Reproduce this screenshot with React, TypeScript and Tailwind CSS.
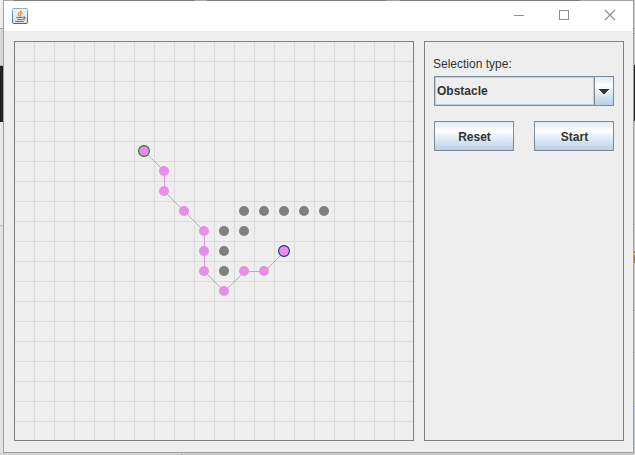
import React from 'react';

type Point = [number, number];

const CELL = 20;
const path: Point[] = [[6, 5], [7, 6], [7, 7], [8, 8], [9, 9], [9, 10], [9, 11], [10, 12], [11, 11], [12, 11], [13, 10]];
const obstacles: Point[] = [[11, 8], [12, 8], [13, 8], [14, 8], [15, 8], [10, 9], [11, 9], [10, 10], [10, 11]];
const lines = Array.from({ length: 19 }, (_, i) => (i + 1) * CELL);
const px = (n: number) => n * CELL + 10;

function JavaIcon() {
  return (
    <svg width="16" height="16" viewBox="0 0 16 16">
      <defs>
        <linearGradient id="tile" x1="0" y1="0" x2="0" y2="1">
          <stop offset="0" stopColor="#f4f6f8" />
          <stop offset="1" stopColor="#d5dfe7" />
        </linearGradient>
        <linearGradient id="edge" x1="0" y1="0" x2="0" y2="1">
          <stop offset="0" stopColor="#9aa9b5" />
          <stop offset="1" stopColor="#3f6e91" />
        </linearGradient>
      </defs>
      <rect x=".5" y=".5" width="15" height="15" rx="1" fill="url(#tile)" stroke="url(#edge)" />
      <path d="M9.3 2.2C9.3 4.2 6 4.5 6.3 6.4C6.4 7.3 7.2 7.7 7.5 8.5M10.7 4.6C8.5 5.2 7.9 6 8.7 6.9C9.1 7.5 8.8 8.1 8.3 8.5" fill="none" stroke="#ee8b2d" strokeWidth="1.2" />
      <path d="M4.3 9.5H11M5.2 11.5H10.5M3.3 13.5H11.8M11 9.3C13.8 8.2 14 11 11 11.4" fill="none" stroke="#4b7fa6" strokeWidth="1.1" />
    </svg>
  );
}

function Board() {
  return (
    <div className="size-[400px] shrink-0 border border-[#808080]">
      <svg className="block" width="398" height="398" viewBox="1 1 398 398">
        <g fill="#dbdbdb">
          {lines.map((v) => (
            <React.Fragment key={v}>
              <rect x={v} y="1" width="1" height="398" />
              <rect x="1" y={v} width="398" height="1" />
            </React.Fragment>
          ))}
        </g>
        <polyline
          points={path.map(([x, y]) => `${px(x) + 0.5},${px(y) + 0.5}`).join(' ')}
          fill="none"
          stroke="#e68fe6"
          shapeRendering="crispEdges"
        />
        {obstacles.map(([x, y]) => (
          <circle key={`${x}-${y}`} cx={px(x)} cy={px(y)} r="5" fill="#808080" />
        ))}
        {path.map(([x, y]) => (
          <circle key={`${x}-${y}`} cx={px(x)} cy={px(y)} r="5" fill="#e68fe6" />
        ))}
        <circle cx="130" cy="110" r="5.4" fill="#e68fe6" stroke="#267326" strokeWidth="1.1" />
        <circle cx="270" cy="210" r="5.4" fill="#e68fe6" stroke="#172f7c" strokeWidth="1.1" />
      </svg>
    </div>
  );
}

const metal = 'border border-[#7a8a99] bg-linear-to-b from-[#dfe9f2] via-white via-30% to-[#b8cfe5]';

function MetalButton({ label }: { label: string }) {
  return (
    <button className={`flex h-[30px] w-20 items-center justify-center pt-0.5 pl-px text-[12px] font-bold ${metal}`}>
      {label}
    </button>
  );
}

function Controls() {
  return (
    <div className="h-[400px] w-[200px] shrink-0 border border-[#808080] px-[9px] pt-[14px]">
      <div className="-ml-px h-5 text-[12px] leading-4">Selection type:</div>
      <div className="flex h-[30px] w-[180px] border border-[#7a8a99]">
        <div className="flex flex-1 items-center border border-[#b8cfe5] pl-px text-[12px] font-bold">Obstacle</div>
        <div className="flex w-[19px] items-center justify-center border-l border-[#7a8a99] bg-linear-to-b from-[#dfe9f2] via-white via-30% to-[#b8cfe5]">
          <svg width="10" height="5" viewBox="0 0 10 5" shapeRendering="crispEdges">
            <path d="M0 0H10V1H9V2H8V3H7V4H6V5H4V4H3V3H2V2H1V1H0Z" fill="#333333" />
          </svg>
        </div>
      </div>
      <div className="mt-[15px] flex gap-5">
        <MetalButton label="Reset" />
        <MetalButton label="Start" />
      </div>
    </div>
  );
}

function TitleBar() {
  return (
    <div className="flex h-[30px] items-center justify-between bg-white pl-2">
      <JavaIcon />
      <svg width="120" height="30" viewBox="0 0 120 30" fill="none" stroke="#8f8f8f">
        <path d="M1 14.5H11" />
        <rect x="46.5" y="9.5" width="9" height="9" />
        <path d="M92 9L102 19M102 9L92 19" strokeWidth="1.2" />
      </svg>
    </div>
  );
}

function TopEdge() {
  return (
    <div className="-mx-px flex h-px bg-[#808080]">
      <div className="w-[11px] bg-[#a6a6a6]" />
      <div className="ml-[180px] w-[13px] bg-[#a6a6a6]" />
      <div className="ml-[180px] w-[13px] bg-[#a6a6a6]" />
      <div className="ml-[180px] flex-1 bg-[#a6a6a6]" />
    </div>
  );
}

export default function App() {
  return (
    <div className="flex h-[455px] w-[635px] flex-col overflow-hidden font-['Liberation_Sans',sans-serif] text-[#333333]">
      <div className="flex h-[453px]">
        <div className="flex w-[3px] flex-col">
          <div className="h-7 bg-[#eeeeee]" />
          <div className="h-px bg-[#a8a8a8]" />
          <div className="h-9 bg-[#d8d8d8]" />
          <div className="h-px bg-[#aaaaaa]" />
          <div className="h-14 bg-[#202226]" />
          <div className="h-[103px] bg-[#e8e8e8]" />
          <div className="h-px bg-[#c0c0c0]" />
          <div className="flex-1 bg-[#e3e3e3]" />
        </div>
        <div className="flex w-[631px] flex-col border-x border-b border-[#a0a0a0] bg-[#eeeeee]">
          <TopEdge />
          <TitleBar />
          <div className="flex gap-[10px] pt-[10px] pl-[10px]">
            <Board />
            <Controls />
          </div>
        </div>
        <div className="flex w-px flex-col bg-[#c8c8c8]">
          <div className="mt-7 h-px bg-[#909090]" />
          <div className="mt-1 h-px bg-[#909090]" />
          <div className="mt-[31px] h-14 bg-[#202226]" />
          <div className="mt-[103px] h-px bg-[#a9a9a9]" />
          <div className="mt-[26px] h-[2px] bg-[#b07520]" />
          <div className="mt-[2px] h-2 bg-[#b07520]" />
          <div className="mt-[47px] h-px bg-[#aaaaaa]" />
          <div className="mt-[41px] h-px bg-[#aaaaaa]" />
          <div className="mt-[53px] h-px bg-[#a0b0d0]" />
          <div className="h-[40px] bg-[#bcc4cf]" />
          <div className="h-px bg-[#a0b0d0]" />
        </div>
      </div>
      <div className="flex h-0.5">
        <div className="w-[181px] bg-[#d2d2d2]" />
        <div className="w-px bg-[#b0b0b0]" />
        <div className="flex-1 bg-[#c8c8c8]" />
      </div>
    </div>
  );
}
